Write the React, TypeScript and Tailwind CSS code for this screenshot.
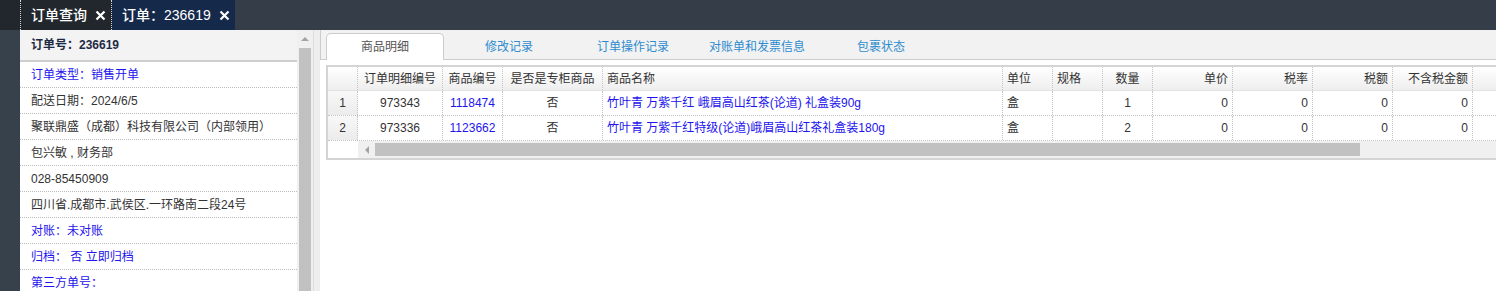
import React from "react";

const FONT = { fontFamily: '"Liberation Sans", "Noto Sans CJK SC", sans-serif' };

const infoRows = [
  { text: "订单类型：销售开单", blue: true },
  { text: "配送日期：2024/6/5" },
  { text: "聚联鼎盛（成都）科技有限公司（内部领用）" },
  { text: "包兴敏 , 财务部" },
  { text: "028-85450909" },
  { text: "四川省.成都市.武侯区.一环路南二段24号" },
  { text: "对账：未对账", blue: true },
  { text: "归档： 否 立即归档", blue: true },
  { text: "第三方单号：", blue: true },
];

const tabs = ["商品明细", "修改记录", "订单操作记录", "对账单和发票信息", "包裹状态"];

type Col = { title: string; w: string; align: string; link?: boolean };

const cols: Col[] = [
  { title: "订单明细编号", w: "w-[85px]", align: "justify-center" },
  { title: "商品编号", w: "w-[60px]", align: "justify-center", link: true },
  { title: "是否是专柜商品", w: "w-[100px]", align: "justify-center" },
  { title: "商品名称", w: "w-[400px]", align: "justify-start", link: true },
  { title: "单位", w: "w-[50px]", align: "justify-start" },
  { title: "规格", w: "w-[50px]", align: "justify-start" },
  { title: "数量", w: "w-[50px]", align: "justify-center" },
  { title: "单价", w: "w-[80px]", align: "justify-end" },
  { title: "税率", w: "w-[80px]", align: "justify-end" },
  { title: "税额", w: "w-[80px]", align: "justify-end" },
  { title: "不含税金额", w: "w-[80px]", align: "justify-end" },
];

const rows = [
  ["973343", "1118474", "否", "竹叶青 万紫千红 峨眉高山红茶(论道) 礼盒装90g", "盒", "", "1", "0", "0", "0", "0"],
  ["973336", "1123662", "否", "竹叶青 万紫千红特级(论道)峨眉高山红茶礼盒装180g", "盒", "", "2", "0", "0", "0", "0"],
];

const Close = () => (
  <svg width="11" height="11" viewBox="0 0 11 11" className="ml-[8px]">
    <path d="M1.5 1.5 L9.5 9.5 M9.5 1.5 L1.5 9.5" stroke="#fff" strokeWidth="2.2" />
  </svg>
);

const App = () => {
  return (
    <div style={FONT} className="flex h-[291px] w-[1496px] flex-col overflow-hidden bg-white text-[12px] text-[#333]">
      {/* top tabs */}
      <div className="flex h-[30px] shrink-0 bg-[#353e48]">
        <div className="w-[20px] bg-[#22272d]" />
        <div className="flex w-[92px] items-center border-x border-dotted border-white/80 bg-[#22272d] pl-[10px] text-[14px] font-medium text-white">
          订单查询
          <Close />
        </div>
        <div className="flex w-[123px] items-center bg-[#15294b] pl-[10px] text-[14px] font-medium text-white">
          订单：236619
          <Close />
        </div>
      </div>

      <div className="flex min-h-0 flex-1">
        <div className="w-[20px] shrink-0 bg-[#36414b]" />

        {/* left info panel */}
        <div className="w-[277px] shrink-0 overflow-hidden">
          <div className="flex h-[32px] items-center border-b-2 border-[#cfcfcf] bg-[#f3f3f3] pl-[11px] font-bold text-[#1e2a44]">
            订单号：236619
          </div>
          {infoRows.map((r, i) => (
            <div
              key={i}
              className={`flex h-[26px] items-center whitespace-pre border-b border-dotted border-[#bbb] pl-[11px] ${
                r.blue ? "text-[#1d14ee]" : "text-[#333]"
              }`}
            >
              {r.text}
            </div>
          ))}
        </div>

        {/* vertical scrollbar */}
        <div className="flex w-[16px] shrink-0 flex-col bg-[#f0f0f0] px-[2px]">
          <div className="flex h-[18px] items-center justify-center">
            <div className="h-0 w-0 border-x-[4px] border-b-[4px] border-x-transparent border-b-[#a3a3a3]" />
          </div>
          <div className="flex-1 bg-[#c1c1c1]" />
        </div>
        <div className="w-[7px] shrink-0 border-l border-[#dedede] bg-[#eeeeee]" />

        {/* right panel */}
        <div className="min-w-0 flex-1 overflow-hidden">
          <div className="flex h-[30px] items-end border-b border-l border-[#cccccc] bg-[#f2f2f2] pl-[5px]">
            {tabs.map((t, i) => (
              <div
                key={t}
                className={`-mb-px mr-[6px] flex h-[27px] w-[118px] shrink-0 items-center justify-center ${
                  i === 0
                    ? "rounded-t-[5px] border border-b-0 border-[#cccccc] bg-white text-[#555]"
                    : "text-[#2e8ccf]"
                }`}
              >
                {t}
              </div>
            ))}
          </div>

          <div className="pl-[6px] pt-[5px]">
            <div className="w-[1200px] border-2 border-[#d4d4d4] bg-white">
              {/* header */}
              <div className="flex h-[24px] border-b border-[#e2e2e2] bg-gradient-to-b from-white to-[#eeeeee]">
                <div className="w-[30px] shrink-0 border-r border-dotted border-[#c4c4c4]" />
                {cols.map((c) => (
                  <div
                    key={c.title}
                    className={`flex ${c.w} shrink-0 items-center ${c.align} whitespace-nowrap border-r border-dotted border-[#c4c4c4] px-[4px]`}
                  >
                    {c.title}
                  </div>
                ))}
                <div className="flex-1" />
              </div>
              {rows.map((r, ri) => (
                <div key={ri} className="flex h-[25px] border-b border-dotted border-[#c4c4c4]">
                  <div className="flex w-[30px] shrink-0 items-center justify-center border-r border-dotted border-[#c4c4c4] bg-gradient-to-b from-[#f8f8f8] to-[#ececec]">
                    {ri + 1}
                  </div>
                  {cols.map((c, ci) => (
                    <div
                      key={ci}
                      className={`flex ${c.w} shrink-0 items-center ${c.align} whitespace-nowrap border-r border-dotted border-[#c4c4c4] px-[4px] ${
                        c.link ? "text-[#1d14ee]" : ""
                      }`}
                    >
                      {r[ci]}
                    </div>
                  ))}
                  <div className="flex-1" />
                </div>
              ))}
              {/* horizontal scrollbar */}
              <div className="flex h-[17px]">
                <div className="w-[30px] shrink-0" />
                <div className="flex flex-1 items-center bg-[#f0f0f0] py-[2px]">
                  <div className="flex w-[17px] items-center justify-center">
                    <div className="h-0 w-0 border-y-[4px] border-r-[4px] border-y-transparent border-r-[#a3a3a3]" />
                  </div>
                  <div className="h-full w-[985px] bg-[#c1c1c1]" />
                </div>
              </div>
            </div>
          </div>
        </div>
      </div>
    </div>
  );
};

export default App;
